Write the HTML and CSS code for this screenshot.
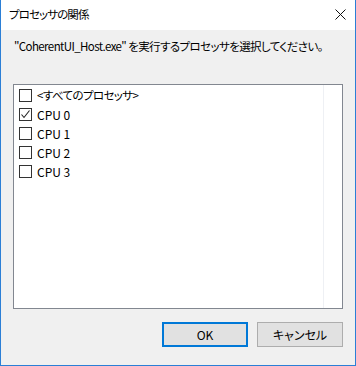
FILE: index.html
```html
<!DOCTYPE html>
<html lang="ja">
<head>
    <meta charset="UTF-8">
    <title>プロセッサの関係</title>
    <link rel="stylesheet" href="styles.css">
</head>
<body>
    <div class="window">
        <div class="titlebar">
            <span class="title">プロセッサの関係</span>
            <svg class="close" width="11" height="11" viewBox="0 0 11 11">
                <path d="M0.5 0.5 L10.5 10.5 M10.5 0.5 L0.5 10.5" stroke="#111" stroke-width="1" fill="none"/>
            </svg>
        </div>
        <div class="content">
            <div class="prompt">"CoherentUI_Host.exe" を実行するプロセッサを選択してください。</div>
            <div class="listbox">
                <div class="items">
                    <div class="item"><span class="check"></span><span class="jp">&lt;すべてのプロセッサ&gt;</span></div>
                    <div class="item"><span class="check">
                        <svg width="11" height="11" viewBox="0 0 11 11">
                            <path d="M1.5 5.5 L4 8.5 L9.5 1.5" stroke="#222" stroke-width="1.1" fill="none"/>
                        </svg>
                    </span>CPU 0</div>
                    <div class="item"><span class="check"></span>CPU 1</div>
                    <div class="item"><span class="check"></span>CPU 2</div>
                    <div class="item"><span class="check"></span>CPU 3</div>
                </div>
                <div class="gutter"></div>
            </div>
            <div class="buttons">
                <button class="btn default">OK</button>
                <button class="btn">キャンセル</button>
            </div>
        </div>
    </div>
</body>
</html>
```

FILE: styles.css
```css
html, body {
    margin: 0;
    padding: 0;
}

body {
    font-family: "Noto Sans CJK JP", "Noto Sans", sans-serif;
    font-size: 12px;
    font-feature-settings: "palt";
    color: #000;
}

.window {
    width: 356px;
    height: 366px;
    box-sizing: border-box;
    border: 1px solid #2b7fd6;
    border-top: none;
    background-color: #f0f0f0;
    display: flex;
    flex-direction: column;
}

.titlebar {
    height: 30px;
    background-color: #fff;
    display: flex;
    align-items: center;
    padding-left: 8px;
    padding-right: 9px;
}

.title {
    flex: 1;
    line-height: 16px;
    margin-top: -2px;
    font-size: 11.5px;
    letter-spacing: -0.9px;
}

.close {
    display: block;
    margin-top: -1px;
}

.content {
    flex: 1;
    padding: 8px 12px 0 12px;
}

.prompt {
    line-height: 16px;
    padding-left: 1px;
    white-space: nowrap;
    font-size: 11.5px;
    letter-spacing: -0.6px;
}

.listbox {
    margin-top: 30px;
    height: 225px;
    box-sizing: border-box;
    border: 1px solid #828790;
    background-color: #fff;
    display: flex;
}

.items {
    flex: 1;
    padding: 1px 5px;
}

.gutter {
    width: 1px;
    background-color: #eef0f4;
    margin-right: 18px;
}

.item {
    height: 19px;
    display: flex;
    align-items: center;
    line-height: 19px;
}

.jp {
    font-size: 11.5px;
    letter-spacing: -0.6px;
}

.check {
    width: 13px;
    height: 13px;
    box-sizing: border-box;
    border: 1px solid #333;
    background-color: #fff;
    margin-right: 5px;
    display: flex;
    align-items: center;
    justify-content: center;
    flex-shrink: 0;
}

.check svg {
    display: block;
}

.buttons {
    margin-top: 13px;
    display: flex;
    justify-content: flex-end;
    gap: 9px;
}

.btn {
    width: 86px;
    height: 25px;
    box-sizing: border-box;
    border: 1px solid #adadad;
    background-color: #e1e1e1;
    font-family: inherit;
    font-size: 12px;
    font-feature-settings: "palt";
    color: #000;
    padding: 0;
}

.btn.default {
    border: 2px solid #0078d7;
}
```
